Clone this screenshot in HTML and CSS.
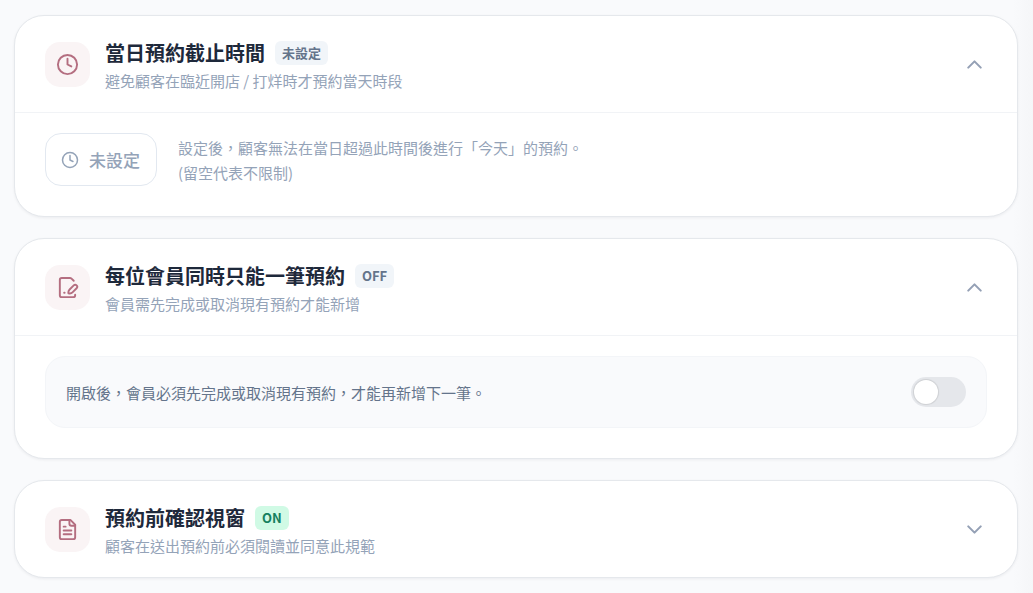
FILE: index.html
```
<!DOCTYPE html>
<html lang="zh-Hant">
<head>
  <meta charset="UTF-8">
  <meta name="viewport" content="width=device-width, initial-scale=1">
  <title>預約設定</title>
  <link rel="stylesheet" href="styles.css">
</head>
<body>

  <main class="settings">
    <section class="card">
      <header class="card-header">
        <div class="card-icon">
          <svg viewBox="0 0 24 24"><circle cx="12" cy="12" r="10"/><path d="M12 6v6l4 2"/></svg>
        </div>
        <div class="card-text">
          <div class="title-row">
            <h2>當日預約截止時間</h2>
            <span class="badge">未設定</span>
          </div>
          <p class="subtitle">避免顧客在臨近開店 / 打烊時才預約當天時段</p>
        </div>
        <button type="button" class="toggle-btn" aria-label="收合" aria-expanded="true">
          <svg viewBox="0 0 24 24"><path d="m18 15-6-6-6 6"/></svg>
        </button>
      </header>
      <div class="card-body time-row">
        <button type="button" class="time-btn">
          <svg viewBox="0 0 24 24"><circle cx="12" cy="12" r="10"/><path d="M12 6v6l4 2"/></svg>
          未設定
        </button>
        <p class="hint">設定後，顧客無法在當日超過此時間後進行「今天」的預約。<br>(留空代表不限制)</p>
      </div>
    </section>

    <section class="card">
      <header class="card-header">
        <div class="card-icon">
          <svg viewBox="0 0 24 24"><path d="M20 19.5v.5a2 2 0 0 1-2 2H6a2 2 0 0 1-2-2V4a2 2 0 0 1 2-2h8.5q1 0 1.700.7L18.500 5"/><path d="M8.500 17.500h.5"/><path d="M13 18c-.3-1.600.2-2.900 1.200-3.900l4.300-4.300a2.100 2.100 0 0 1 3 3l-4.300 4.300c-1 1-2.600 1.300-4.200.9Z"/></svg>
        </div>
        <div class="card-text">
          <div class="title-row">
            <h2>每位會員同時只能一筆預約</h2>
            <span class="badge">OFF</span>
          </div>
          <p class="subtitle">會員需先完成或取消現有預約才能新增</p>
        </div>
        <button type="button" class="toggle-btn" aria-label="收合" aria-expanded="true">
          <svg viewBox="0 0 24 24"><path d="m18 15-6-6-6 6"/></svg>
        </button>
      </header>
      <div class="card-body">
        <div class="switch-row">
          <label for="single-booking">開啟後，會員必須先完成或取消現有預約，才能再新增下一筆。</label>
          <input type="checkbox" role="switch" class="switch" id="single-booking">
        </div>
      </div>
    </section>

    <section class="card">
      <header class="card-header">
        <div class="card-icon">
          <svg viewBox="0 0 24 24"><path d="M15 2H6a2 2 0 0 0-2 2v16a2 2 0 0 0 2 2h12a2 2 0 0 0 2-2V7Z"/><path d="M14 2v4a2 2 0 0 0 2 2h4"/><path d="M10 9H8"/><path d="M16 13H8"/><path d="M16 17H8"/></svg>
        </div>
        <div class="card-text">
          <div class="title-row">
            <h2>預約前確認視窗</h2>
            <span class="badge badge-on">ON</span>
          </div>
          <p class="subtitle">顧客在送出預約前必須閱讀並同意此規範</p>
        </div>
        <button type="button" class="toggle-btn" aria-label="展開" aria-expanded="false">
          <svg viewBox="0 0 24 24"><path d="m6 9 6 6 6-6"/></svg>
        </button>
      </header>
    </section>
  </main>

</body>
</html>
```

FILE: styles.css
```
* {
  box-sizing: border-box;
}
body {
  margin: 0;
  background: linear-gradient(to left, #f5f6f8, #f9fafc 20px);
  font-family: 'Noto Sans CJK TC', sans-serif;
  color: #1e293b;
}
h2, p {
  margin: 0;
}
button {
  font-family: inherit;
  cursor: pointer;
}
svg {
  display: block;
  fill: none;
  stroke: currentColor;
  stroke-width: 2;
  stroke-linecap: round;
  stroke-linejoin: round;
}
.settings {
  display: flex;
  flex-direction: column;
  gap: 21px;
  padding: 15px 15px 15px 14px;
}
.card {
  background: #ffffff;
  border: 1px solid #e5e8ec;
  border-radius: 30px;
  box-shadow: 0 1px 3px rgba(15, 23, 42, 0.06);
}
.card-header {
  display: flex;
  align-items: center;
  gap: 15px;
  padding: 20px 30px 19px;
}
.card-icon {
  display: flex;
  align-items: center;
  justify-content: center;
  flex: none;
  width: 45px;
  height: 45px;
  border-radius: 15px;
  background: #faf4f5;
  color: #b46e80;
}
.card-icon svg {
  width: 23px;
  height: 23px;
}
.card-text {
  flex: 1;
  padding-top: 2px;
}
.title-row {
  display: flex;
  align-items: center;
  gap: 10px;
}
h2 {
  font-size: 20px;
  line-height: 30px;
  font-weight: 700;
}
.badge {
  padding: 0 7px;
  border-radius: 6px;
  background: #f1f5f9;
  color: #64748b;
  font-size: 13px;
  line-height: 24px;
  font-weight: 700;
}
.badge-on {
  background: #d0fae5;
  color: #158060;
}
.subtitle {
  font-size: 15px;
  line-height: 25px;
  color: #94a3b8;
}
.toggle-btn {
  padding: 0;
  border: none;
  background: none;
  color: #94a0b5;
}
.toggle-btn svg {
  width: 25px;
  height: 25px;
}
.card-body {
  padding: 20px 30px 30px;
  border-top: 1px solid #f1f3f6;
}
.time-row {
  display: flex;
  align-items: center;
  gap: 21px;
}
.time-btn {
  display: flex;
  align-items: center;
  gap: 10px;
  height: 53px;
  padding: 0 16px 0 15px;
  border: 1px solid #e2e8f0;
  border-radius: 16px;
  background: #ffffff;
  color: #94a3b8;
  font-size: 17px;
  font-weight: 500;
}
.time-btn svg {
  width: 18px;
  height: 18px;
}
.hint {
  font-size: 15px;
  line-height: 25px;
  color: #94a3b8;
}
.switch-row {
  display: flex;
  align-items: center;
  justify-content: space-between;
  gap: 20px;
  padding: 20px;
  border: 1px solid #f3f5f8;
  border-radius: 20px;
  background: #f9fafc;
  color: #64748b;
  font-size: 15px;
}
.switch {
  appearance: none;
  display: flex;
  align-items: center;
  flex: none;
  width: 55px;
  height: 30px;
  margin: 0;
  padding: 0 3px;
  border-radius: 15px;
  background: #e5e7eb;
  cursor: pointer;
}
.switch::before {
  content: '';
  width: 24px;
  height: 24px;
  border-radius: 50%;
  background: #ffffff;
  box-shadow: 0 0 1px 1px rgba(0, 0, 0, 0.1);
}
.switch:checked {
  justify-content: flex-end;
  background: #b46e80;
}
```
